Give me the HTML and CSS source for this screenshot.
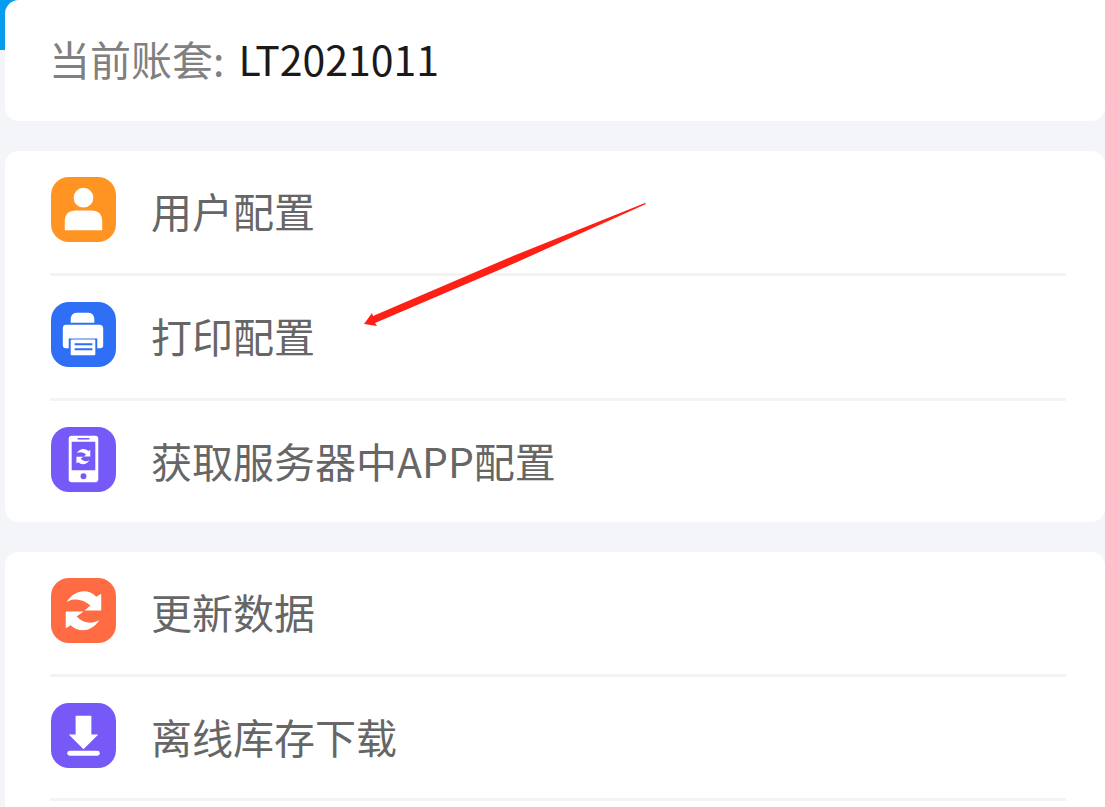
FILE: index.html
```html
<!DOCTYPE html>
<html lang="zh-CN">
<head>
    <meta charset="UTF-8">
    <meta name="viewport" content="width=device-width, initial-scale=1.0">
    <title>配置</title>
    <link rel="stylesheet" href="styles.css">
</head>
<body>
    <!-- Current account -->
    <div class="card account">
        <span class="account-label">当前账套:</span>
        <span class="account-value">LT2021011</span>
    </div>

    <!-- Configuration -->
    <nav class="card menu">
        <a href="#" class="menu-item">
            <svg class="icon orange" viewBox="0 0 66 66" aria-hidden="true">
                <circle cx="33" cy="21" r="10" fill="#fff"/>
                <path d="M14 54V45C14 38 18 34 25 34H41C48 34 52 38 52 45V54Z" fill="#fff"/>
            </svg>
            <span>用户配置</span>
        </a>
        <a href="#" class="menu-item">
            <svg class="icon blue" viewBox="0 0 66 66" aria-hidden="true">
                <path d="M20 21V18C20 14 22 11 26 11H38C42 11 44 14 44 18V21Z" fill="#fff"/>
                <path d="M15 23H49Q53 23 53 27V44Q53 47 50 47H47V37H18V47H15Q12 47 12 44V27Q12 23 15 23Z" fill="#fff"/>
                <rect x="20" y="38" width="25" height="16" rx="1" fill="#fff"/>
                <path d="M24 43H42M24 48H42" stroke="#2f6ff6" stroke-width="2"/>
            </svg>
            <span>打印配置</span>
        </a>
        <a href="#" class="menu-item">
            <svg class="icon purple" viewBox="0 0 66 66" aria-hidden="true">
                <path fill-rule="evenodd" d="M21 9H45Q48 9 48 12V53Q48 56 45 56H21Q18 56 18 53V12Q18 9 21 9ZM21 15V44H45V15Z" fill="#fff"/>
                <path d="M27 12H39" stroke="#7759f8" stroke-width="1.5"/>
                <circle cx="33" cy="50" r="3" fill="#7759f8"/>
                <g fill="#fff" transform="translate(20 17) scale(0.39)">
                    <path d="M16 24C24 12 37 10 46 19L51 16V33H34L40 28C33 22 25 20 16 24Z"/>
                    <path d="M49 43C41 55 28 56 20 48L15 51V34H33L26 39C33 46 41 47 49 43Z"/>
                </g>
            </svg>
            <span>获取服务器中APP配置</span>
        </a>
    </nav>

    <!-- Data -->
    <nav class="card menu menu-data">
        <a href="#" class="menu-item">
            <svg class="icon red" viewBox="0 0 66 66" aria-hidden="true">
                <path d="M16 24C24 12 37 10 46 19L51 16V33H34L40 28C33 22 25 20 16 24Z" fill="#fff"/>
                <path d="M49 43C41 55 28 56 20 48L15 51V34H33L26 39C33 46 41 47 49 43Z" fill="#fff"/>
            </svg>
            <span>更新数据</span>
        </a>
        <a href="#" class="menu-item">
            <svg class="icon purple" viewBox="0 0 66 66" aria-hidden="true">
                <path d="M25 13H41V32H48L33 47L18 32H25Z" fill="#fff"/>
                <path d="M19 51H47" stroke="#fff" stroke-width="5" stroke-linecap="round"/>
            </svg>
            <span>离线库存下载</span>
        </a>
    </nav>

    <!-- Pointer to the print settings -->
    <svg class="arrow" viewBox="0 0 284 124" aria-hidden="true">
        <path d="M1 121L9 110L10 113L150 53L282 0L283 1L152 60L12 120L14 123Z" fill="#ff2015"/>
    </svg>
</body>
</html>
```

FILE: styles.css
```css
* {
    box-sizing: border-box;
}
body {
    font-family: "Noto Sans CJK SC", sans-serif;
    font-size: 41px;
    line-height: 60px;
    margin: 0;
    padding-left: 5px;
    min-height: 100vh;
    display: flex;
    flex-direction: column;
    gap: 30px;
    position: relative;
    color: #666;
    background: linear-gradient(#069df0, #069df0) 0 0 / 20px 50px no-repeat #f3f5f8;
}
.card {
    background-color: #fff;
    border-radius: 14px;
}
.account {
    display: flex;
    gap: 14px;
    padding: 28px 44px 33px;
    border-top-right-radius: 0;
}
.account-label {
    color: #808080;
}
.account-value {
    color: #1a1a1a;
}
.menu {
    padding: 0 39px 0 45px;
}
.menu-item {
    display: flex;
    align-items: center;
    gap: 35px;
    padding: 26px 0 31px;
    border-bottom: 3px solid #f3f3f4;
    color: inherit;
    text-decoration: none;
}
.menu-item:last-child {
    padding-bottom: 30px;
    border-bottom: none;
}
.menu-data {
    flex: 1;
    border-radius: 14px 14px 0 0;
}
.menu-data .menu-item:last-child {
    border-bottom: 3px solid #f3f3f4;
}
.icon {
    width: 65px;
    height: 65px;
    margin-left: 1px;
    border-radius: 18px;
    flex-shrink: 0;
}
.orange {
    background-color: #ff9423;
}
.blue {
    background-color: #2f6ff6;
}
.purple {
    background-color: #7759f8;
}
.red {
    background-color: #ff6b42;
}
.arrow {
    position: absolute;
    left: 363px;
    top: 203px;
    width: 284px;
    height: 124px;
    pointer-events: none;
}
```
